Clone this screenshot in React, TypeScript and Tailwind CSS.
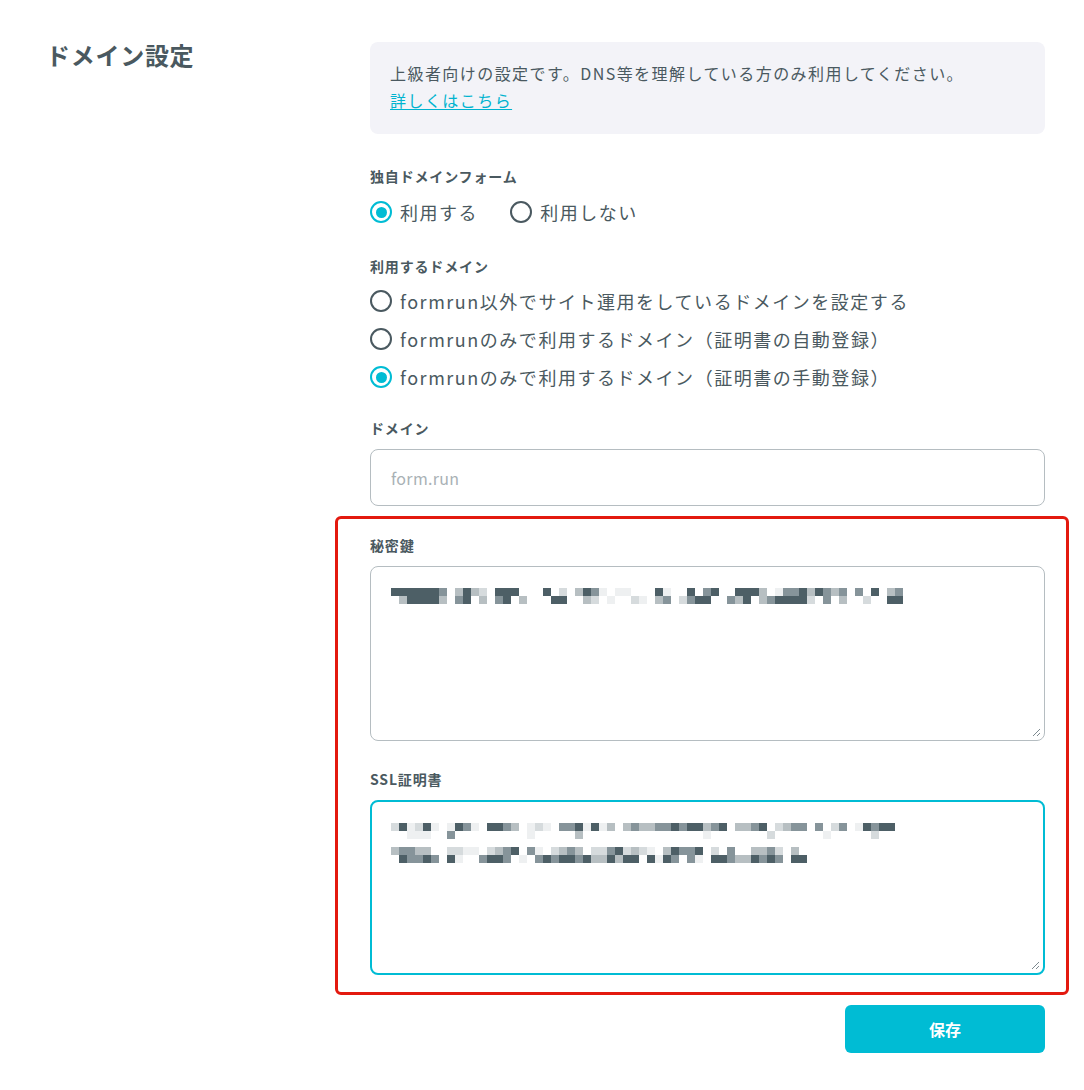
const SHADES: Record<string, string> = {
  "1": "#eef0f1",
  "2": "#d6dbdd",
  "3": "#b7bfc2",
  "4": "#86949a",
  "5": "#4d5f66",
};

// blurred (mosaic) values, one string per 8px row of cells
const SECRET = [
  "5555554035320555000502035410110005100504500555301445354340405034",
  "0355553045030450300055003201002103402455004350345555204030020055",
];

const CERT = [
  "251251015410554301210445151303433445455345033450234404024015455",
  "001110040000000001000003000000000000000100000002000000100000200",
  "3443300221102345041023430224523210354450204003342030",
  "0544540510045540104545545335355051540410554335454055",
];

const Mosaic = ({ rows, gap = 0 }: { rows: string[]; gap?: number }) => {
  const cell = 8;
  const width = Math.max(...rows.map((r) => r.length)) * cell;
  const lines = rows.length / 2;
  const height = rows.length * cell + (lines - 1) * gap;
  return (
    <svg width={width} height={height} className="block">
      {rows.map((row, r) =>
        row.split("").map((c, i) =>
          SHADES[c] ? (
            <rect
              key={`${r}-${i}`}
              x={i * cell}
              y={r * cell + Math.floor(r / 2) * gap}
              width={cell}
              height={cell}
              fill={SHADES[c]}
            />
          ) : null
        )
      )}
    </svg>
  );
};

const Grip = () => (
  <svg
    width="9"
    height="9"
    viewBox="0 0 9 9"
    className="absolute bottom-[3px] right-[3px]"
  >
    <path d="M8 1L1 8M8 5L5 8" stroke="#7d8a90" strokeWidth="1" />
  </svg>
);

const Radio = ({ checked, label }: { checked?: boolean; label: string }) => (
  <label className="flex h-[30px] items-center gap-2">
    <span
      className={
        checked
          ? "flex h-[22px] w-[22px] items-center justify-center rounded-full border-[2.5px] border-[#00bcd4]"
          : "flex h-[22px] w-[22px] items-center justify-center rounded-full border-[2.5px] border-[#4a5960]"
      }
    >
      {checked && <span className="h-[11px] w-[11px] rounded-full bg-[#00bcd4]" />}
    </span>
    <span className="text-[18px] tracking-[0.085em]">{label}</span>
  </label>
);

const Label = ({ children }: { children: string }) => (
  <p className="text-[14px] font-bold leading-[20px] tracking-[0.06em]">{children}</p>
);

export default function App() {
  return (
    <div
      className="flex min-h-[1090px] bg-white pl-[46px] pt-[41px] text-[#4a5960]"
      style={{ fontFamily: '"Noto Sans CJK JP", "Noto Sans", sans-serif' }}
    >
      <div className="w-[324px]">
        <h1 className="text-[24px] font-bold leading-[28px] tracking-[0.03em]">ドメイン設定</h1>
      </div>

      <div className="flex w-[675px] flex-col pt-px">
        <div className="rounded-lg bg-[#f3f3f8] px-5 pb-[20px] pt-[18px] text-[16px] leading-[27px] tracking-[0.09em]">
          <p>上級者向けの設定です。DNS等を理解している方のみ利用してください。</p>
          <a href="#" className="text-[#00b3cf] underline underline-offset-2">
            詳しくはこちら
          </a>
        </div>

        <div className="mt-8">
          <Label>独自ドメインフォーム</Label>
          <div className="mt-[11px] flex gap-8">
            <Radio checked label="利用する" />
            <Radio label="利用しない" />
          </div>
        </div>

        <div className="mt-[29px]">
          <Label>利用するドメイン</Label>
          <div className="mt-[10px] flex flex-col gap-2">
            <Radio label="formrun以外でサイト運用をしているドメインを設定する" />
            <Radio label="formrunのみで利用するドメイン（証明書の自動登録）" />
            <Radio checked label="formrunのみで利用するドメイン（証明書の手動登録）" />
          </div>
        </div>

        <div className="mt-[26px]">
          <Label>ドメイン</Label>
          <input
            type="text"
            placeholder="form.run"
            className="mt-[11px] h-[57px] w-full rounded-lg border border-[#b5bdc1] px-5 text-[16px] tracking-[0.02em] outline-none placeholder:text-[#a9b1b5]"
          />
        </div>

        <div className="-ml-[35px] -mr-[24px] mt-[10px] rounded-md border-[3px] border-[#e3190f] pb-[17px] pl-[32px] pr-[21px] pt-[16px]">
          <Label>秘密鍵</Label>
          <div className="relative mt-[11px] h-[175px] rounded-lg border border-[#b5bdc1] pl-5 pt-[21px]">
            <Mosaic rows={SECRET} />
            <Grip />
          </div>

          <div className="mt-[28px]">
            <Label>SSL証明書</Label>
          </div>
          <div className="relative mt-[11px] h-[175px] rounded-lg border-2 border-[#00bcd4] pl-[19px] pt-[21px]">
            <Mosaic rows={CERT} gap={8} />
            <Grip />
          </div>
        </div>

        <div className="mt-[10px] flex justify-end">
          <button className="h-[48px] w-[200px] rounded-md bg-[#00bcd4] text-[16px] font-bold text-white">
            保存
          </button>
        </div>
      </div>
    </div>
  );
}
